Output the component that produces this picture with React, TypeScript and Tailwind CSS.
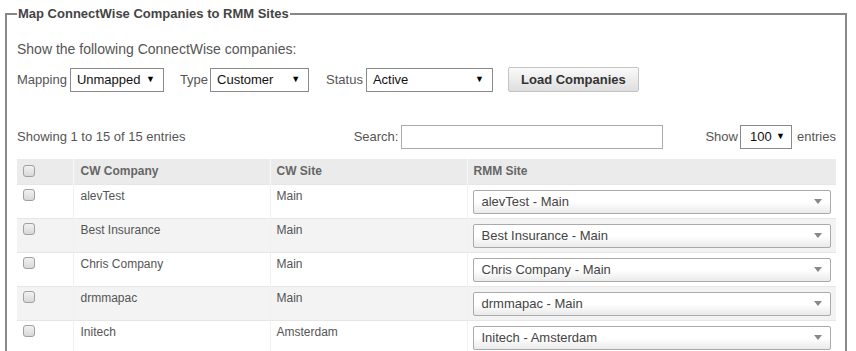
import React from "react";

const rows = [
  { company: "alevTest", site: "Main" },
  { company: "Best Insurance", site: "Main" },
  { company: "Chris Company", site: "Main" },
  { company: "drmmapac", site: "Main" },
  { company: "Initech", site: "Amsterdam" },
];

function Box() {
  return (
    <span className="inline-block w-[12px] h-[12px] rounded-[3px] border border-[#a0a0a0] bg-gradient-to-b from-[#f2f2f2] to-[#d8d8d8]" />
  );
}

function PlainSelect({ value, width }: { value: string; width: string }) {
  return (
    <div
      className={`${width} h-[24px] border border-[#8a8a8a] bg-white flex items-center justify-between pl-[6px] pr-[8px] text-[#111]`}
    >
      <span>{value}</span>
      <span className="text-[9px] text-black">▼</span>
    </div>
  );
}

export default function App() {
  return (
    <div className="w-[856px] h-[351px] overflow-hidden bg-white pt-[6px] pl-[5px] font-['Liberation_Sans',Arial,sans-serif] text-[13px] text-[#555]">
      <fieldset className="w-[842px] h-[400px] border-2 border-[#888] pl-[10px] pr-[9px]">
        <legend className="font-bold text-[13px] text-[#444] px-[1px] leading-[16px]">
          Map ConnectWise Companies to RMM Sites
        </legend>

        <div className="mt-[19px] leading-[16px] text-[14px]">Show the following ConnectWise companies:</div>

        <div className="mt-[10px] flex items-center">
          <span className="mr-[3px]">Mapping</span>
          <PlainSelect value="Unmapped" width="w-[94px]" />
          <span className="ml-[16px] mr-[2px]">Type</span>
          <PlainSelect value="Customer" width="w-[99px]" />
          <span className="ml-[17px] mr-[3px]">Status</span>
          <PlainSelect value="Active" width="w-[127px]" />
          <button className="ml-[15px] h-[25px] w-[131px] border border-[#c4c4c4] rounded-[2px] bg-gradient-to-b from-[#fafafa] to-[#dedede] font-bold text-[#333]">
            Load Companies
          </button>
        </div>

        <div className="mt-[33px] flex items-center h-[24px]">
          <span className="flex-1">Showing 1 to 15 of 15 entries</span>
          <span className="mr-[3px]">Search:</span>
          <div className="w-[262px] h-[24px] border border-[#aaa] bg-white" />
          <span className="ml-[42px] mr-[2px]">Show</span>
          <div className="w-[52px] h-[24px] border border-[#8a8a8a] flex items-center justify-between pl-[9px] pr-[6px] text-[#111]">
            <span>100</span>
            <span className="text-[9px] text-black">▼</span>
          </div>
          <span className="ml-[5px]">entries</span>
        </div>

        <table className="mt-[10px] w-[819px] border-collapse table-fixed">
          <colgroup>
            <col className="w-[56px]" />
            <col className="w-[197px]" />
            <col className="w-[197px]" />
            <col />
          </colgroup>
          <thead>
            <tr className="bg-[#ebebeb] text-[#666] h-[25px] text-[12px]">
              <th className="border-r border-[#f8f8f8] pl-[6px] text-left align-middle">
                <span className="flex"><Box /></span>
              </th>
              <th className="border-r border-[#f8f8f8] pl-[7px] text-left font-bold">CW Company</th>
              <th className="border-r border-[#f8f8f8] pl-[6px] text-left font-bold">CW Site</th>
              <th className="pl-[6px] text-left font-bold">RMM Site</th>
            </tr>
          </thead>
          <tbody>
            {rows.map((r, i) => (
              <tr
                key={r.company}
                className={`${i % 2 === 1 ? "bg-[#f3f3f3]" : "bg-white"} border-t border-[#e6e6e6]`}
              >
                <td className="border-r border-[#f0f0f0] pl-[6px] pt-[4px] align-top h-[33px]">
                  <span className="flex"><Box /></span>
                </td>
                <td className="border-r border-[#f0f0f0] pl-[7px] pt-[3px] align-top leading-[16px] text-[12px]">
                  {r.company}
                </td>
                <td className="border-r border-[#f0f0f0] pl-[6px] pt-[3px] align-top leading-[16px] text-[12px]">
                  {r.site}
                </td>
                <td className="pl-[5px] pr-[5px] pt-[5px] pb-[4px] align-top">
                  <div className="h-[24px] border border-[#aaa] rounded-[2px] bg-gradient-to-b from-white from-50% to-[#eaeaea] flex items-center justify-between pl-[8px] pr-[8px] text-[#444]">
                    <span>{`${r.company} - ${r.site}`}</span>
                    <span className="w-0 h-0 border-l-[4px] border-r-[4px] border-t-[5px] border-l-transparent border-r-transparent border-t-[#888]" />
                  </div>
                </td>
              </tr>
            ))}
          </tbody>
        </table>
      </fieldset>
    </div>
  );
}
